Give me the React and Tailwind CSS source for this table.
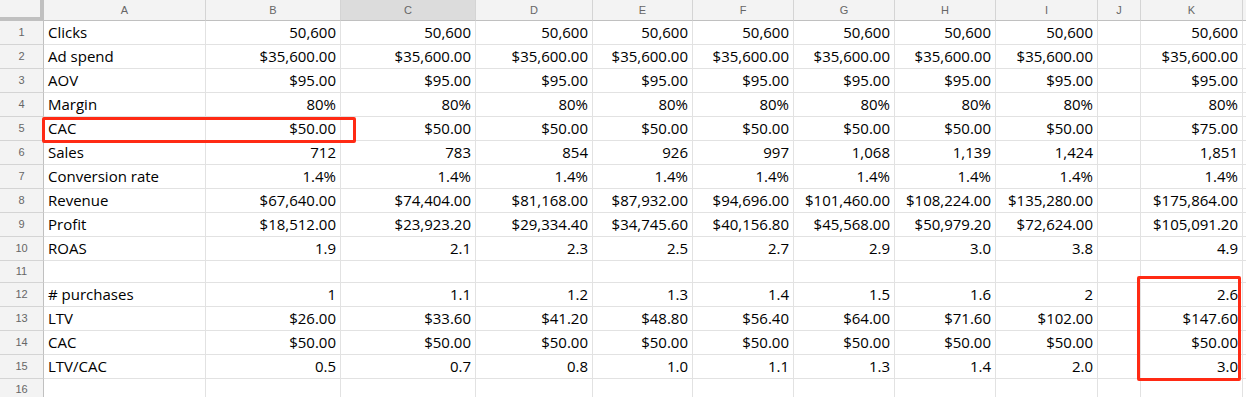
import React from "react";

const COLS = ["A", "B", "C", "D", "E", "F", "G", "H", "I", "J", "K"];
const GRID = "grid grid-cols-[44px_162px_135px_135px_117px_100px_101px_101px_101px_102px_43px_102px_1fr]";

const rep = (v) => Array(8).fill(v);

const rows = [
    { label: "Clicks", vals: rep("50,600"), k: "50,600" },
    { label: "Ad spend", vals: rep("$35,600.00"), k: "$35,600.00" },
    { label: "AOV", vals: rep("$95.00"), k: "$95.00" },
    { label: "Margin", vals: rep("80%"), k: "80%" },
    { label: "CAC", vals: rep("$50.00"), k: "$75.00" },
    { label: "Sales", vals: ["712", "783", "854", "926", "997", "1,068", "1,139", "1,424"], k: "1,851" },
    { label: "Conversion rate", vals: rep("1.4%"), k: "1.4%" },
    {
        label: "Revenue",
        vals: ["$67,640.00", "$74,404.00", "$81,168.00", "$87,932.00", "$94,696.00", "$101,460.00", "$108,224.00", "$135,280.00"],
        k: "$175,864.00",
    },
    {
        label: "Profit",
        vals: ["$18,512.00", "$23,923.20", "$29,334.40", "$34,745.60", "$40,156.80", "$45,568.00", "$50,979.20", "$72,624.00"],
        k: "$105,091.20",
    },
    { label: "ROAS", vals: ["1.9", "2.1", "2.3", "2.5", "2.7", "2.9", "3.0", "3.8"], k: "4.9" },
    null,
    { label: "# purchases", vals: ["1", "1.1", "1.2", "1.3", "1.4", "1.5", "1.6", "2"], k: "2.6" },
    {
        label: "LTV",
        vals: ["$26.00", "$33.60", "$41.20", "$48.80", "$56.40", "$64.00", "$71.60", "$102.00"],
        k: "$147.60",
    },
    { label: "CAC", vals: rep("$50.00"), k: "$50.00" },
    { label: "LTV/CAC", vals: ["0.5", "0.7", "0.8", "1.0", "1.1", "1.3", "1.4", "2.0"], k: "3.0" },
    null,
];

function Cell({ children, right, h }) {
    return (
        <div
            className={`${h} overflow-hidden whitespace-nowrap border-r border-b border-[#e2e2e2] px-[4px] leading-[23px] text-[15px] text-black ${
                right ? "text-right" : "text-left"
            }`}
        >
            {children}
        </div>
    );
}

export default function App() {
    return (
        <div className="relative h-[397px] w-[1246px] overflow-hidden bg-white font-['Open_Sans',sans-serif]">
            {/* Column headers */}
            <div className={`${GRID} h-[21px]`}>
                <div className="border-r-[4px] border-b-[4px] border-[#c0c0c0] bg-[#f3f3f3]" />
                {COLS.map((c) => (
                    <div
                        key={c}
                        className={`flex items-center justify-center border-r border-b border-r-[#d4d4d4] border-b-[#c0c0c0] font-['Liberation_Sans',sans-serif] text-[11px] text-[#666] ${
                            c === "C" ? "bg-[#dcdcdc]" : "bg-[#f3f3f3]"
                        }`}
                    >
                        {c}
                    </div>
                ))}
                <div className="border-b border-[#c0c0c0] bg-[#f3f3f3]" />
            </div>

            {/* Rows */}
            {rows.map((r, i) => {
                const h = r ? "h-[24px]" : "h-[22px]";
                const row = r || { label: "", vals: rep(""), k: "" };
                return (
                    <div key={i} className={GRID}>
                        <div
                            className={`${h} flex items-center justify-center border-r border-b border-r-[#c0c0c0] border-b-[#d4d4d4] bg-[#f3f3f3] font-['Liberation_Sans',sans-serif] text-[11px] text-[#666]`}
                        >
                            {i + 1}
                        </div>
                        <Cell h={h}>{row.label}</Cell>
                        {row.vals.map((v, j) => (
                            <Cell key={j} h={h} right>
                                {v}
                            </Cell>
                        ))}
                        <Cell h={h} />
                        <Cell h={h} right>
                            {row.k}
                        </Cell>
                        <div className={`${h} border-b border-[#e2e2e2]`} />
                    </div>
                );
            })}

            {/* Annotations */}
            <div className="pointer-events-none absolute left-[42px] top-[117px] h-[26px] w-[314px] rounded-[2px] border-[3px] border-[#ff2a14]" />
            <div className="pointer-events-none absolute left-[1137px] top-[276px] h-[105px] w-[104px] rounded-[2px] border-[3px] border-[#ff2a14]" />
        </div>
    );
}
